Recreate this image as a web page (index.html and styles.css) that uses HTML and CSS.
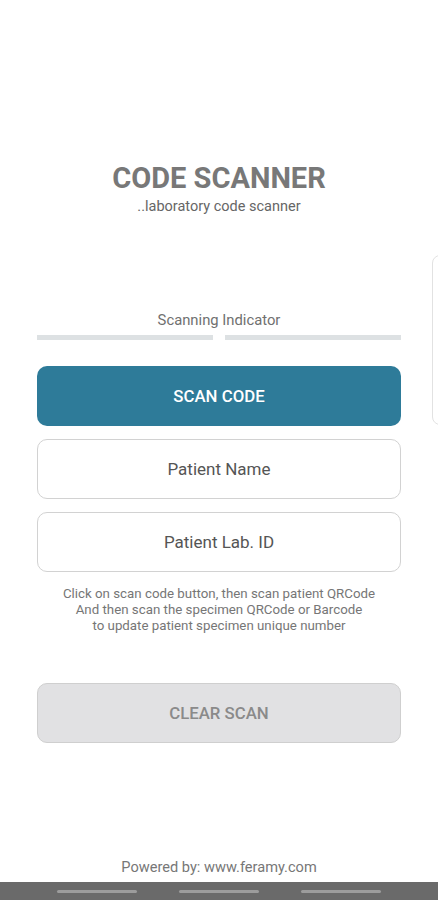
FILE: index.html
```html
<!DOCTYPE html>
<html lang="en">
<head>
<meta charset="utf-8">
<title>Code Scanner</title>
<link rel="stylesheet" href="styles.css">
</head>
<body>
<div class="screen">
  <main class="content">
    <h1 class="title">CODE SCANNER</h1>
    <p class="subtitle">..laboratory code scanner</p>
    <p class="indicator-label">Scanning Indicator</p>
    <div class="indicator">
      <span class="bar"></span>
      <span class="bar"></span>
    </div>
    <button class="btn btn-primary" type="button">SCAN CODE</button>
    <div class="field">Patient Name</div>
    <div class="field">Patient Lab. ID</div>
    <p class="hint">Click on scan code button, then scan patient QRCode<br>And then scan the specimen QRCode or Barcode<br>to update patient specimen unique number</p>
    <button class="btn btn-clear" type="button">CLEAR SCAN</button>
  </main>
  <footer class="footer">Powered by: www.feramy.com</footer>
  <nav class="navbar">
    <span class="pill"></span>
    <span class="pill"></span>
    <span class="pill"></span>
  </nav>
  <div class="edge-panel"></div>
</div>
</body>
</html>
```
FILE: styles.css
```css
* { box-sizing: border-box; }
html, body {
  margin: 0;
  padding: 0;
  background: #ffffff;
}
body {
  font-family: Roboto, "Liberation Sans", Arial, sans-serif;
}
.screen {
  position: relative;
  width: 438px;
  height: 900px;
  display: flex;
  flex-direction: column;
  overflow: hidden;
}
.content {
  flex: 1;
  display: flex;
  flex-direction: column;
  padding: 162px 37px 0 37px;
}
.title {
  margin: 0;
  font-size: 29px;
  line-height: 32px;
  font-weight: 700;
  color: #787878;
  text-align: center;
}
.subtitle {
  margin: 4px 0 0;
  font-size: 14.5px;
  line-height: 18px;
  color: #666666;
  text-align: center;
}
.indicator-label {
  margin: 95px 0 0;
  font-size: 14.8px;
  line-height: 18px;
  color: #707070;
  text-align: center;
}
.indicator {
  display: flex;
  gap: 12px;
  margin-top: 6px;
}
.bar {
  flex: 1;
  height: 5px;
  background: #dde1e3;
}
.btn {
  display: block;
  width: 100%;
  height: 60px;
  border-radius: 10px;
  font-family: Roboto, "Liberation Sans", Arial, sans-serif;
  font-size: 16.8px;
  font-weight: 500;
  cursor: pointer;
}
.btn-primary {
  margin-top: 26px;
  background: #2e7b99;
  color: #ffffff;
  border: none;
}
.field {
  margin-top: 13px;
  height: 60px;
  border: 1px solid #d2d2d2;
  border-radius: 10px;
  display: flex;
  align-items: center;
  justify-content: center;
  font-size: 17px;
  color: #555555;
}
.hint {
  margin: 14px 0 0;
  font-size: 13.3px;
  line-height: 16px;
  color: #767676;
  text-align: center;
}
.btn-clear {
  margin-top: 49px;
  background: #e1e1e3;
  color: #8a8a8a;
  border: 1px solid #cfcfcf;
}
.footer {
  font-size: 14.6px;
  line-height: 18px;
  color: #777777;
  text-align: center;
  margin-bottom: 6px;
}
.navbar {
  height: 18px;
  background: #6a6a6a;
  display: flex;
  justify-content: center;
  align-items: center;
  gap: 42px;
}
.pill {
  width: 80px;
  height: 3px;
  border-radius: 2px;
  background: #9c9c9c;
}
.edge-panel {
  position: absolute;
  left: 432px;
  top: 255px;
  width: 20px;
  height: 170px;
  border: 1px solid #e2e2e2;
  border-radius: 8px;
  background: #ffffff;
}
```
